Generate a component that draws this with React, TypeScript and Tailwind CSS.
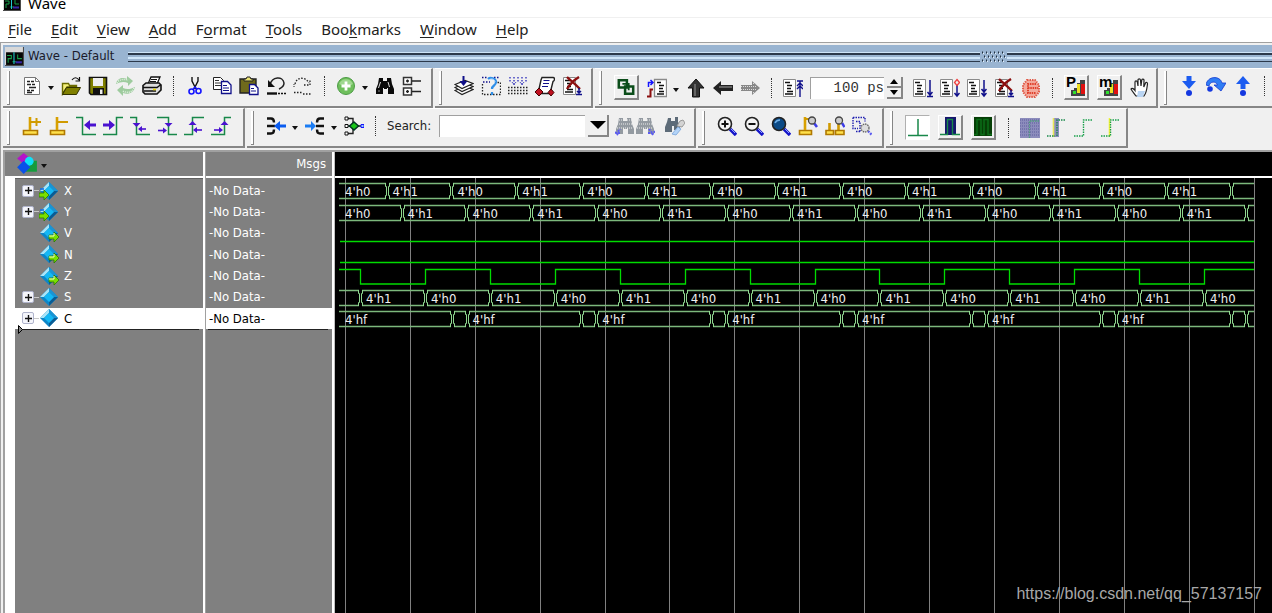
import { useState, type ReactNode } from "react";
import clsx from "clsx";

const UI = "font-['DejaVu_Sans_Condensed','DejaVu_Sans',sans-serif]";

const MENU: [string, string, string][] = [
  ["", "F", "ile"],
  ["", "E", "dit"],
  ["", "V", "iew"],
  ["", "A", "dd"],
  ["F", "o", "rmat"],
  ["", "T", "ools"],
  ["Boo", "k", "marks"],
  ["", "W", "indow"],
  ["", "H", "elp"],
];

type Signal = { name: string; bus: boolean; dir?: "in" | "out" };

const SIGNALS: Signal[] = [
  { name: "X", bus: true, dir: "in" },
  { name: "Y", bus: true, dir: "in" },
  { name: "V", bus: false, dir: "out" },
  { name: "N", bus: false, dir: "out" },
  { name: "Z", bus: false, dir: "out" },
  { name: "S", bus: true },
  { name: "C", bus: true },
];

/* ---------- icons, all on a 20x20 grid ---------- */

function Svg({ children, size = 20 }: { children: ReactNode; size?: number }) {
  return (
    <svg width={size} height={size} viewBox="0 0 20 20" fill="none" className="shrink-0" aria-hidden="true">
      {children}
    </svg>
  );
}

// page with text lines, shared by the run / breakpoint icons
const Page = ({ x = 0 }: { x?: number }) => (
  <g transform={`translate(${x} 0)`}>
    <path d="M1.5 1.5h12v17h-12z" fill="#fff" stroke="#8a8a8a" />
    <path d="M3 4.5h5M5 7.5h5M5 10.5h4M5 13.5h6M3 16h8" stroke="#111" strokeWidth="1.4" />
  </g>
);

const RedX = () => <path d="M5 1c3 3 7 6 13 12M17 1C12 4 8 8 5 13" stroke="#8b0f0f" strokeWidth="2.4" />;

const PostBase = ({ x = 0, w = 14 }: { x?: number; w?: number }) => (
  <g transform={`translate(${x} 0)`}>
    <path d={`M1.5 14.5h${w}v4h-${w}z`} fill="#ffe04a" stroke="#b07800" strokeWidth="1.6" />
    <path d={`M${w / 2 + 1} 1v13`} stroke="#d8a000" strokeWidth="2.6" />
  </g>
);

const Lens = ({ fill, children }: { fill: string; children?: ReactNode }) => (
  <Svg>
    <path d="M13 13l6 6" stroke="#1414c8" strokeWidth="3.4" />
    <path d="M13 12l5 5" stroke="#8fa0ff" strokeWidth="1" />
    <circle cx="8" cy="8" r="6.5" fill={fill} stroke="#222" strokeWidth="1.6" />
    {children}
  </Svg>
);

const Bino = ({ fill }: { fill: string }) => (
  <path d="M4 2h4v3h4V2h4l1 6 2 5v5h-6v-6h-1v1H9v-1H8v6H1v-5l2-5z" fill={fill} />
);

const icons = {
  doc: (
    <Svg>
      <path d="M2.500 1.500h11l4 4v13h-15z" fill="#fff" stroke="#777" />
      <path d="M13.500 1.500v4h4" stroke="#777" />
      <path d="M5 5.500h3M9 5.500h3M5 8.500h4M10 8.500h3M7 11.500h7M5 14.500h3M9 14.500h3M5 16.500h5" stroke="#222" strokeWidth="1.300" />
    </Svg>
  ),
  open: (
    <Svg>
      <path d="M1.500 18V7.500h6l1 2h7V11H6z" fill="#f5f07a" stroke="#6b6b00" strokeWidth="1.400" />
      <path d="M5.500 11.500h14l-4 7h-14z" fill="#808000" stroke="#333300" />
      <path d="M11 4c2-3 5-3 7 0M18.500 1v4h-4" stroke="#111" strokeWidth="1.200" />
    </Svg>
  ),
  save: (
    <Svg>
      <path d="M1.500 1.500h17v17H3l-1.500-1.500z" fill="#808000" stroke="#111" strokeWidth="1.600" />
      <path d="M5 2h10v8H5z" fill="#eee" />
      <path d="M5 12h11v6H5z" fill="#111" />
      <path d="M12 13.500h2.500V18H12z" fill="#eee" />
    </Svg>
  ),
  reload: (
    <Svg>
      <path d="M1 8c1-6 7-7 11-5V0l6 5-5 5V7C9 5 5 6 1 8z" fill="#9ecb9e" />
      <path d="M20 11c-1 6-7 8-12 6v3l-6-6 6-5v3c4 2 8 1 12-1z" fill="#9ecb9e" />
      <path d="M2 7c2-4 7-4 11-3M19 12c-2 5-7 5-12 3" stroke="#e4f2e4" strokeDasharray="1 1" strokeWidth="1.500" />
    </Svg>
  ),
  print: (
    <Svg>
      <path d="M6 8l3-7h9l-3 7z" fill="#fff" stroke="#111" strokeWidth="1.300" />
      <path d="M9 3.500h6M8 5.500h6" stroke="#111" />
      <path d="M1 9.500L4 7h13l2 2v5l-4 4H3l-2-2z" fill="#ddd" stroke="#111" strokeWidth="1.600" />
      <path d="M1 11.500h14l4-3M2 15h12" stroke="#111" strokeWidth="1.400" />
      <path d="M11 13.500h3" stroke="#e8d800" strokeWidth="1.600" />
    </Svg>
  ),
  cut: (
    <Svg>
      <path d="M7 1v4l4 8M13 1v4l-4 8" stroke="#111" strokeWidth="1.400" />
      <circle cx="6.500" cy="15.500" r="2.500" stroke="#1414ff" strokeWidth="1.600" />
      <circle cx="13.500" cy="15" r="2.500" stroke="#1414ff" strokeWidth="1.600" />
      <path d="M8 13l2-2 2 2" stroke="#1414ff" strokeWidth="1.400" />
    </Svg>
  ),
  copy: (
    <Svg>
      <path d="M1.500 1.500h7l3 3v9h-10z" fill="#fff" stroke="#222" />
      <path d="M3 4.500h4M3 7h6M3 9.500h6" stroke="#333" />
      <path d="M9.500 5.500h6l3.500 3.500v8.500H9.500z" fill="#fff" stroke="#10108a" strokeWidth="1.300" />
      <path d="M11 9.500h4M11 12h6M11 14.500h6" stroke="#10108a" />
    </Svg>
  ),
  paste: (
    <Svg>
      <path d="M1 3h16v14H1z" fill="#6f6a1c" stroke="#222" strokeWidth="1.400" />
      <path d="M5 5V3h2l1-2h3l1 2h2v2z" fill="#e8e070" stroke="#222" />
      <path d="M10.500 8.500h5l3.500 3.500v6.500h-8.500z" fill="#fff" stroke="#10108a" strokeWidth="1.300" />
      <path d="M12 12.500h3M12 15h5" stroke="#10108a" />
    </Svg>
  ),
  undo: (
    <Svg>
      <path d="M4 9C6 0 17 0 18 7c0 4-3 5-5 6" stroke="#222" strokeWidth="1.500" />
      <path d="M2 4v7h7z" fill="#111" />
      <path d="M1 17.500h10" stroke="#111" strokeWidth="2.400" />
      <path d="M12 17.500h8" stroke="#111" strokeWidth="1.600" strokeDasharray="2 1" />
    </Svg>
  ),
  redo: (
    <Svg>
      <path d="M2 8C4 0 13 1 16 7M11 9h6V3" stroke="#222" strokeWidth="1.300" strokeDasharray="1.500 1.500" />
      <path d="M1 16.500h9M10 18h9" stroke="#222" strokeWidth="1.500" strokeDasharray="1.500 1.500" />
      <path d="M1 8v4" stroke="#222" strokeDasharray="1 1" />
    </Svg>
  ),
  add: (
    <Svg>
      <circle cx="10" cy="10" r="8.500" fill="#6fbf5c" stroke="#4c9c45" />
      <path d="M3 8a7.500 7.500 0 0 1 14 0c-3 2-10 2-14 0z" fill="#9fd88f" />
      <path d="M10 5.500v9M5.500 10h9" stroke="#fff" strokeWidth="2.800" />
    </Svg>
  ),
  find: (
    <Svg>
      <Bino fill="#0a0a0a" />
      <path d="M5.500 6l-2 6M13 6l1.500 5" stroke="#ddd" />
      <path d="M3 15h2" stroke="#888" />
    </Svg>
  ),
  tree: (
    <Svg>
      <path d="M1.500 1.500h8v7h-8zM1.500 12h8v7h-8z" fill="#fff" stroke="#333" strokeWidth="1.500" />
      <path d="M4 5h3M5.500 3.500v3M4 15.500h3M5.500 14v3M10 5h9M10 15.500h9" stroke="#222" strokeWidth="1.300" />
    </Svg>
  ),
  compile: (
    <Svg>
      {[14.5, 11.5, 8.5].map((y) => (
        <path key={y} d={`M1 ${y}l10-4 8 3-11 5z`} fill="#fff" stroke="#222" strokeWidth="1.2" />
      ))}
      <path d="M9.500 0v6" stroke="#10108a" strokeWidth="2" />
      <path d="M5.500 5h8l-4 5z" fill="#10108a" />
    </Svg>
  ),
  compileOutdated: (
    <Svg>
      <path d="M1.500 8v10.500h18v-12H16" stroke="#222" strokeWidth="1.300" strokeDasharray="1.500 1.500" />
      <path d="M1 1.500h5M13 1.500h5M2 6h7" stroke="#10108a" strokeWidth="1.300" strokeDasharray="1.500 1.500" />
      <path d="M7 3c2-2 8-1 8 3 0 4-4 3-4 7M11 16v3" stroke="#2f8fe8" strokeWidth="2.200" />
      <path d="M8 4c2-2 6-1 6 2" stroke="#b8dcff" />
    </Svg>
  ),
  compileAll: (
    <Svg>
      <path d="M2 1v6M6 1v8M10 1v6M14 1v8M18 1v6" stroke="#2828b8" strokeWidth="1.300" strokeDasharray="1.500 1.500" />
      <path d="M4 6l2 3 2-3M12 6l2 3 2-3" stroke="#2828b8" strokeDasharray="1 1" />
      <path d="M0 11.500h20M0 14.500h20M0 17.500h20" stroke="#222" strokeWidth="1.500" strokeDasharray="1.500 1.500" />
    </Svg>
  ),
  simulate: (
    <Svg>
      <path d="M7 1.500h11c2 0 2 3 0 4l-3 12H3L6 4z" fill="#fff" stroke="#222" strokeWidth="1.400" />
      <path d="M8.500 4.500h6M8 7.500h6M7 10.500h6" stroke="#10108a" strokeWidth="1.200" />
      <path d="M4 12l4 4-4 4-4-4zM16 13l3 3.500-3 3.500-3-3.500z" fill="#c01020" stroke="#400" />
    </Svg>
  ),
  breakSim: (
    <Svg>
      <Page x={0} />
      <RedX />
      <path d="M17 12v6M14 18.500h6M15 15l2 2 2-2" stroke="#10108a" strokeWidth="1.500" />
    </Svg>
  ),
  env: (
    <Svg size={18}>
      <path d="M2 2.500h9v8H2zM9 9.500h9v8H9z" stroke="#0b4d1a" strokeWidth="2.800" />
      <path d="M6 6.500h7v7" stroke="#0b4d1a" strokeWidth="2" />
    </Svg>
  ),
  restart: (
    <Svg>
      <path d="M7.500 1.500h12v17h-12z" fill="#fff" stroke="#8a8a8a" strokeWidth="1.300" />
      <path d="M10 4.500h4M12 7.500h5M12 10.500h4M12 13.500h5M10 16h7" stroke="#111" strokeWidth="1.400" />
      <path d="M1.500 9V4.500H6M3.500 2l2.500 2.500L3.500 7" stroke="#1414ff" strokeWidth="1.500" />
      <path d="M6 11.500H3.500v7H0" stroke="#8b0f0f" strokeWidth="2" />
    </Svg>
  ),
  up: (
    <Svg>
      <path d="M10 1l8 9h-4.500v9h-7v-9H2z" fill="#333" stroke="#111" />
      <path d="M9 6v12" stroke="#777" strokeWidth="1.500" />
    </Svg>
  ),
  left: (
    <Svg>
      <path d="M0 10l8-7v4h12v6H8v4z" fill="#222" />
      <path d="M6 9h13" stroke="#777" strokeWidth="1.500" />
    </Svg>
  ),
  right: (
    <Svg>
      <path d="M20 10l-8-7v4H1v6h11v4z" fill="#888" />
      <path d="M1 8.500h16M1 11.500h16M13 5.500h3M13 14.500h3" stroke="#ddd" strokeDasharray="1 1" />
    </Svg>
  ),
  runLength: (
    <Svg>
      <Page x={-1} />
      <path d="M17 3v16M14 3h6M14 8l3-3 3 3M14 11l3-3 3 3" stroke="#10108a" strokeWidth="1.400" />
    </Svg>
  ),
  run: (
    <Svg>
      <Page x={-1} />
      <path d="M17 2v16M14 18.500h6M14.500 14l2.500 3 2.500-3" stroke="#10108a" strokeWidth="1.500" />
    </Svg>
  ),
  runContinue: (
    <Svg>
      <Page x={-1} />
      <path d="M17 7v11M14.500 15l2.500 3 2.500-3" stroke="#10108a" strokeWidth="1.500" />
      <path d="M17 1.500l2.500 3-2.500 3-2.500-3z" stroke="#f04040" strokeWidth="1.300" />
    </Svg>
  ),
  runAll: (
    <Svg>
      <Page x={-1} />
      <path d="M17 2v16M14.500 11l2.500 3 2.500-3M14.500 15l2.500 3 2.500-3" stroke="#10108a" strokeWidth="1.500" />
    </Svg>
  ),
  stop: (
    <Svg>
      <path d="M6 2h8l4 5v7l-4 5H6l-4-5V7z" fill="#f3a99c" />
      <path d="M6 2h8l4 5v7l-4 5H6l-4-5V7z" stroke="#e05a48" strokeWidth="2" strokeDasharray="1.500 1" />
      <path d="M15 6H7v9h8M7 10h10" stroke="#e0412c" strokeWidth="2" strokeDasharray="1.500 .8" />
    </Svg>
  ),
  hand: (
    <Svg>
      <path
        d="M6 18c-2-3-4-5-5-7 1-1.500 3 0 4 1.500V4c0-1.500 2-1.500 2.300 0L8 8V2c0-1.500 2.300-1.500 2.500 0L11 8l.8-6c.2-1.500 2.300-1 2.200.300L13.800 9 15.500 5c.6-1.200 2.200-.5 2 .8C17 9 17 14 14 18z"
        fill="#fff"
        stroke="#222"
        strokeWidth="1.200"
      />
      <path d="M8 13h7l-2 6H7z" fill="#b9d4f2" />
    </Svg>
  ),
  stepInto: (
    <Svg>
      <path d="M7.500 0h5v5H17l-7 8-7-8h4.500z" fill="#1c5cf0" />
      <circle cx="10" cy="17" r="3" fill="#1438e0" />
    </Svg>
  ),
  stepOver: (
    <Svg>
      <path d="M0 9C1 0 14-1 16 7h4l-5 8-7-6h3.500C10 5 4 5 3 10z" fill="#2f7df4" stroke="#1438d0" strokeWidth=".8" />
      <circle cx="4" cy="13" r="2.800" fill="#1438e0" />
    </Svg>
  ),
  stepOut: (
    <Svg>
      <path d="M10 0l7 8h-4.500v5h-5V8H3z" fill="#1c5cf0" />
      <circle cx="10" cy="17" r="3" fill="#1438e0" />
    </Svg>
  ),
  cursorAdd: (
    <Svg>
      <PostBase />
      <path d="M8 6h11M14.500 2v8" stroke="#d09a00" strokeWidth="2" />
    </Svg>
  ),
  cursorDel: (
    <Svg>
      <PostBase />
      <path d="M8 6h11" stroke="#d09a00" strokeWidth="2" />
    </Svg>
  ),
  prevTrans: (
    <Svg>
      <path d="M0 1.500h6.500v17H20" stroke="#18884a" strokeWidth="1.500" />
      <path d="M8 9l6-5v3.500h6v3h-6V14z" fill="#4a12d0" />
    </Svg>
  ),
  nextTrans: (
    <Svg>
      <path d="M0 18.500h13.500v-17H20" stroke="#18884a" strokeWidth="1.500" />
      <path d="M12 9L6 4v3.500H0v3h6V14z" fill="#4a12d0" />
    </Svg>
  ),
  prevFall: (
    <Svg>
      <path d="M0 1.500h6.500v17H20" stroke="#18884a" strokeWidth="1.500" />
      <path d="M6.500 11l-4-4h8zM8 13l4-3v6z" fill="#4a12d0" />
      <path d="M11 13h5" stroke="#4a12d0" strokeWidth="1.600" />
    </Svg>
  ),
  nextFall: (
    <Svg>
      <path d="M0 1.500h11.500v17H20" stroke="#18884a" strokeWidth="1.500" />
      <path d="M11.500 11l-4-4h8zM10 14.500l-4-3v6z" fill="#4a12d0" />
      <path d="M1 14.500h6" stroke="#4a12d0" strokeWidth="1.600" />
    </Svg>
  ),
  prevRise: (
    <Svg>
      <path d="M0 18.500h8.500v-17H20" stroke="#18884a" strokeWidth="1.500" />
      <path d="M8.500 5l-4 4h8zM9 14l4-3v6z" fill="#4a12d0" />
      <path d="M12 14h6" stroke="#4a12d0" strokeWidth="1.600" />
    </Svg>
  ),
  nextRise: (
    <Svg>
      <path d="M0 18.500h13.500v-17H20" stroke="#18884a" strokeWidth="1.500" />
      <path d="M13.500 5l-4 4h8zM12 14l-4-3v6z" fill="#4a12d0" />
      <path d="M3 14h6" stroke="#4a12d0" strokeWidth="1.600" />
    </Svg>
  ),
  drivers: (
    <Svg>
      <path d="M1 2.500h4c2 0 3 2 3 4M1 17.500h4c2 0 3-2 3-4M1 10h8" stroke="#111" strokeWidth="2.400" />
      <path d="M8 10l6-5v3.500h6v3h-6V15z" fill="#0a5cf0" />
    </Svg>
  ),
  readers: (
    <Svg>
      <path d="M19 2.500h-4c-2 0-3 2-3 4M19 17.500h-4c-2 0-3-2-3-4M11 10h8" stroke="#111" strokeWidth="2.400" />
      <path d="M11 10L6 5v3.500H0v3h6V15z" fill="#1a7cf4" />
    </Svg>
  ),
  fanout: (
    <Svg>
      <path d="M3 2.500h6v15H3M2 10h15" stroke="#222" strokeWidth="1.400" />
      <path d="M1 1h3v3H1zM1 8.500h3v3H1zM1 16h3v3H1z" fill="#fff" stroke="#111" />
      <path d="M10 6l4.500 4-4.500 4-4.500-4z" fill="#18c818" stroke="#032" strokeWidth="1.500" />
      <path d="M17 8.500h3v3h-3z" fill="#9cf" stroke="#1414ff" />
    </Svg>
  ),
  findPrev: (
    <Svg>
      <g opacity=".6">
        <Bino fill="#55606c" />
      </g>
      <path d="M2 4h16M2 8h16M2 12h16" stroke="#eee" strokeDasharray="1 1" />
      <path d="M1 18l4-5M0 16l3 3M3 17h3" stroke="#5c5cf0" strokeWidth="2" strokeDasharray="2 1" />
    </Svg>
  ),
  findNext: (
    <Svg>
      <g opacity=".6">
        <Bino fill="#55606c" />
      </g>
      <path d="M2 4h16M2 8h16M2 12h16" stroke="#eee" strokeDasharray="1 1" />
      <path d="M14 13l4 5M20 15l-3 4M13 17h4" stroke="#5c5cf0" strokeWidth="2" strokeDasharray="2 1" />
    </Svg>
  ),
  findOpts: (
    <Svg>
      <path d="M3 2h3v3h4V1h3v5l2 3v5H9v-4H7v6H0v-5l2-5z" fill="#5d6b78" />
      <path d="M12 10l3-5 3-1 2 3-3 4z" fill="#d4d4d4" stroke="#999" />
      <path d="M7 18l6-7 3 2-5 6z" fill="#b4d4f8" stroke="#88b0e0" />
    </Svg>
  ),
  zoomIn: (
    <Lens fill="#f4f4f4">
      <path d="M4.500 8h7M8 4.500v7" stroke="#111" strokeWidth="2" />
    </Lens>
  ),
  zoomOut: (
    <Lens fill="#f4f4f4">
      <path d="M4.500 8h7" stroke="#111" strokeWidth="2" />
    </Lens>
  ),
  zoomFull: (
    <Lens fill="#0b4a86">
      <path d="M4 7c1-2 3-3 5-3" stroke="#6fb0e8" strokeWidth="1.500" />
    </Lens>
  ),
  zoomCursor: (
    <Svg>
      <PostBase w={12} />
      <path d="M7 3h4" stroke="#d09a00" strokeWidth="2" />
      <path d="M16 7l3 4" stroke="#3c3ce8" strokeWidth="2.600" />
      <circle cx="14" cy="4.500" r="3.500" fill="#ccc" stroke="#444" strokeWidth="1.300" />
    </Svg>
  ),
  zoomCursors: (
    <Svg>
      <path d="M4.500 7v7M13.500 7v7" stroke="#d09a00" strokeWidth="2.600" />
      <path d="M1 14.500h7.500v4H1zM10.500 14.500H19v4h-8.500z" fill="#ffe04a" stroke="#b07800" strokeWidth="1.600" />
      <path d="M17 7l2.500 4" stroke="#3c3ce8" strokeWidth="2.400" />
      <circle cx="14" cy="4.500" r="3.500" fill="#ccc" stroke="#444" strokeWidth="1.300" />
    </Svg>
  ),
  zoomArea: (
    <Svg>
      <path d="M1 1.500h12v4M1 1.500v11h5M4 5.500h4v10M4 15.500h5" stroke="#2020b0" strokeWidth="1.400" strokeDasharray="1.500 1" />
      <path d="M16 15l4 4" stroke="#5c5cf0" strokeWidth="2.400" strokeDasharray="2 1" />
      <circle cx="13" cy="12" r="4" fill="#ddd" stroke="#666" strokeDasharray="1.500 .8" strokeWidth="1.300" />
    </Svg>
  ),
  expanded: (
    <Svg>
      <path d="M0 17.500h20M10 1v16" stroke="#18884a" strokeWidth="1.500" />
    </Svg>
  ),
  expandedDelta: (
    <Svg>
      <path d="M5 0h11v18H5z" fill="#16166e" />
      <path d="M0 17.500h7.500v-15h5v15H20" stroke="#18884a" strokeWidth="1.400" />
    </Svg>
  ),
  expandedEvent: (
    <Svg>
      <path d="M1 0h18v19H1z" fill="#063f06" />
      <path d="M1 17.500h3v-15h4v15h3v-15h4v15h4" stroke="#0b6e18" strokeWidth="1.500" />
    </Svg>
  ),
  expandAll: (
    <Svg>
      <path d="M0 0h20v20H0z" fill="#8c8cbc" />
      <path d="M0 2h20M0 5h20M0 8h20M0 11h20M0 14h20M0 17h20" stroke="#5c5c9c" strokeDasharray="1 1" />
      <path d="M9.500 20V3H20" stroke="#4f9c7c" strokeWidth="1.300" strokeDasharray="1.500 1" />
    </Svg>
  ),
  expandCursor: (
    <Svg>
      <path d="M7 0h5v19H7z" fill="#8c8cbc" />
      <path d="M6.500 0v19" stroke="#e8e85a" strokeWidth="1.600" />
      <path d="M0 18h8M10 18V2h9" stroke="#18884a" strokeWidth="1.400" strokeDasharray="1.500 1" />
    </Svg>
  ),
  collapseAll: (
    <Svg>
      <path d="M0 18h9.500V2H19" stroke="#18a04a" strokeWidth="1.400" strokeDasharray="1.500 1" />
    </Svg>
  ),
  collapseCursor: (
    <Svg>
      <path d="M8.500 0v19" stroke="#f4f43a" strokeWidth="1.600" />
      <path d="M0 18h9.500V2H19" stroke="#18a04a" strokeWidth="1.400" strokeDasharray="1.500 1" />
    </Svg>
  ),
};

type IconName = keyof typeof icons;

function PerfIcon({ letter }: { letter: string }) {
  return (
    <span className="relative block size-5">
      <Svg>
        <path d="M5 13h3v-2h3V6h3V3h5v16H5z" fill="#444" />
        <path d="M7 14h3v3H7z" fill="#2ee02e" />
        <path d="M11 7h3v9h-3z" fill="#f0e020" />
        <path d="M15 7h4v10h-4z" fill="#e01010" />
      </Svg>
      <b className="absolute left-0 top-0 font-['Liberation_Sans',sans-serif] text-[15px] leading-[10px] text-black">
        {letter}
      </b>
    </span>
  );
}

function AppLogo({ size }: { size: number }) {
  return (
    <svg width={size} height={size} viewBox="0 0 18 18" className="shrink-0" aria-hidden="true">
      <path d="M0 0h18v18H0z" fill="#4a4a4a" />
      <path d="M0 0h17v17H0z" fill="#d8d8d8" />
      <path d="M1 5h16v12H1z" fill="#050505" />
      <path d="M2 8h4v3H3v4M12 7v4h4M7 14h4" stroke="#17a04a" fill="none" />
      <path d="M8.500 5v11" stroke="#20c8d0" />
      <path d="M10 14.500h6" stroke="#3a28a8" strokeWidth="2" />
    </svg>
  );
}

/* ---------- toolbar parts ---------- */

function Tool({ icon, label }: { icon: IconName; label: string }) {
  return (
    <button aria-label={label} className="flex h-7 w-[27px] shrink-0 items-center justify-center">
      {icons[icon]}
    </button>
  );
}

function Raised({ label, pressed, children }: { label: string; pressed?: boolean; children: ReactNode }) {
  return (
    <button
      aria-label={label}
      className={clsx(
        "flex size-[25px] shrink-0 items-center justify-center border",
        pressed
          ? "border-[#b0b0b0] border-b-white border-r-white bg-white"
          : "border-b-2 border-r-2 border-white border-b-[#868686] border-r-[#868686]"
      )}
    >
      {children}
    </button>
  );
}

const RaisedSet = ({ children }: { children: ReactNode }) => (
  <span className="ml-1 mr-1 flex shrink-0 gap-2">{children}</span>
);

function Drop({ label }: { label: string }) {
  return (
    <button aria-label={label} className="flex h-7 w-3 shrink-0 items-center justify-center pt-1">
      <svg width="6" height="4" viewBox="0 0 6 4" aria-hidden="true">
        <path d="M0 0h6L3 4z" fill="#111" />
      </svg>
    </button>
  );
}

const Sep = () => (
  <span className="flex w-4 shrink-0 justify-center">
    <span className="h-5 border-l border-dotted border-[#333]" />
  </span>
);

// groups of flat icons sit a little higher than the ones with raised buttons
function Group({ children, className, flat }: { children: ReactNode; className?: string; flat?: boolean }) {
  return (
    <div
      role="toolbar"
      className={clsx(
        "mr-[2px] flex h-10 shrink-0 items-center border-b-2 border-r-2 border-t border-[#868686] border-t-white pl-1",
        className
      )}
    >
      <span className="mr-2 h-[34px] w-[3px] shrink-0 border-b border-r border-b-[#868686] border-r-[#868686] bg-white" />
      <div className={clsx("flex min-w-0 flex-1 items-center", flat && "pb-1")}>{children}</div>
    </div>
  );
}

/* ---------- signal list ---------- */

function SignalIcon({ dir }: { dir?: "in" | "out" }) {
  return (
    <Svg>
      <path d="M10 1l9 9-9 9-9-9z" fill="#0d86c8" />
      <path d="M10 1L1 10l4 0 5-5z" fill="#a8e4f8" />
      <path d="M10 1v4l5 5h4z" fill="#1a94d4" />
      <path d="M10 19v-4l5-5h4z" fill="#0a5c94" />
      <path d="M10 5l5 5-5 5-5-5z" fill="#14b8f4" />
      {dir && (
        <path
          d={dir === "in" ? "M0 12h5V9l5 5-5 5v-3H0z" : "M10 12h5V9l5 5-5 5v-3h-5z"}
          fill="#7ae000"
          stroke="#2a7a00"
          strokeWidth=".8"
        />
      )}
      {dir === "in" && <path d="M1 8h4" stroke="#1470e0" strokeWidth="1.600" />}
      {dir === "out" && <path d="M10 13h5V10" stroke="#f4ffd0" />}
    </Svg>
  );
}

function SignalRow({ signal, selected, onSelect }: { signal: Signal; selected: boolean; onSelect: () => void }) {
  return (
    <li className={clsx("flex items-center pl-[7px]", selected ? "bg-white text-black" : "text-white")}>
      <span className="flex w-[17px] shrink-0 items-center">
        {signal.bus && (
          <>
            <button
              aria-label={`Expand ${signal.name}`}
              className="flex size-3 shrink-0 items-center justify-center rounded-[2px] border border-[#b0b4cc] bg-[#f4f5fb]"
            >
              <svg width="7" height="7" viewBox="0 0 7 7" aria-hidden="true">
                <path d="M0 3.500h7M3.500 0v7" stroke="#111" strokeWidth="1.400" />
              </svg>
            </button>
            <span className="h-px flex-1 bg-[#c8c8c8]" />
          </>
        )}
      </span>
      <button className="flex flex-1 items-center gap-[5px] text-left" onClick={onSelect}>
        <SignalIcon dir={signal.dir} />
        {signal.name}
      </button>
    </li>
  );
}

/* ---------- waveform ---------- */

// x is measured from the left edge of the wave pane, y from below its header
const STEP = 64.93;
const START = 4;
const END = 919;

const steps = (first: number, step = STEP) => {
  const out: number[] = [];
  for (let x = first; x < END; x += step) out.push(x);
  return out;
};

type BusWave = { top: number; edges: number[]; labels: { x: number; text: string }[] };

function alternate(top: number, first: number, startLabel: boolean): BusWave {
  const edges = steps(first);
  const labels = edges
    .map((x, i) => ({ x: x + 6, text: i % 2 === 0 ? "4'h1" : "4'h0" }))
    .filter((l) => l.x < END - 25);
  if (startLabel) labels.unshift({ x: 10, text: "4'h0" });
  return { top, edges, labels };
}

const carry = steps(131.5, STEP * 2);

const BUSES: BusWave[] = [
  alternate(5, 51.5, true),
  alternate(27, 66.5, true),
  alternate(112, 25, false),
  {
    top: 133,
    edges: [...steps(116.5, STEP * 2), ...carry],
    labels: [10, ...carry.filter((x) => x < END - 30).map((x) => x + 6)].map((x) => ({ x, text: "4'hf" })),
  },
];

function Bus({ top, edges, labels }: BusWave) {
  const xs = [...edges].sort((a, b) => a - b).map(Math.round);
  const bot = top + 15;
  const bounds = [START, ...xs, END];
  return (
    <g>
      {bounds.slice(1).map((x, i) => {
        const from = i === 0 ? START : bounds[i] + 2;
        const to = x === END ? END : x - 1;
        return <path key={x} d={`M${from} ${top + 0.5}H${to}M${from} ${bot + 0.5}H${to}`} />;
      })}
      {xs.map((x) => (
        <path
          key={x}
          stroke="#90d890"
          strokeWidth="1"
          d={`M${x - 1.5} ${top}v3.500h1v9h-1v3.500M${x + 2.5} ${top}v3.500h-1v9h1v3.500`}
        />
      ))}
      {labels.map((l) => (
        <text key={l.x} x={l.x} y={top + 13} fill="#f0f0f0" stroke="none">
          {l.text}
        </text>
      ))}
    </g>
  );
}

function zPath() {
  let d = `M${START} 91.500`;
  steps(25).forEach((x, i) => {
    d += `H${Math.round(x) + 0.5}V${i % 2 === 0 ? 106 : 91.5}`;
  });
  return `${d}H${END}`;
}

function Waves() {
  return (
    <svg className="w-0 flex-1 text-[13px]" fill="none" role="img" aria-label="Waveforms">
      {steps(10.3).concat(END + 0.5).map((x) => (
        <path key={x} d={`M${Math.floor(x) + 0.5} 0v3000`} stroke="#808080" />
      ))}
      <g stroke="#7cb87c" strokeWidth="1.300">
        {BUSES.map((b) => (
          <Bus key={b.top} {...b} />
        ))}
      </g>
      <g stroke="#00dc00" strokeWidth="1.300">
        <path d={`M${START + 1} 63.500H${END}M${START + 1} 84.500H${END}`} />
        <path d={zPath()} />
      </g>
    </svg>
  );
}

/* ---------- page ---------- */

const Grip = () => (
  <span className="flex h-[10px] flex-col justify-between border-t border-[#cfe6fa]">
    <span className="h-[2px] bg-[#2c3a4c]" />
    <span className="h-[2px] bg-[#cfe6fa]" />
    <span className="h-px bg-[#2c3a4c]" />
  </span>
);

const PANE_HEAD = "flex h-6 items-center bg-[#808080] text-white";
const FIELD = "h-[22px] border-l border-t border-[#a0a0a0] bg-white";

export default function App() {
  const [selected, setSelected] = useState("C");
  const [search, setSearch] = useState("");
  const [runLength, setRunLength] = useState("100 ps");

  return (
    <div className={clsx("flex h-screen flex-col overflow-hidden bg-[#f0f0f0] text-[13px] text-black", UI)}>
      <header className="flex h-[17px] shrink-0 items-end gap-[7px] bg-white pb-[6px] pl-[3px] font-['Noto_Sans',sans-serif] text-[15px]">
        <AppLogo size={18} />
        <h1 className="leading-4">Wave</h1>
      </header>

      <nav className="flex h-[26px] shrink-0 items-center gap-[19px] border-b border-t border-[#a0a0a0] border-t-[#f0f0f0] bg-white pb-[2px] pl-2 font-['Noto_Sans',sans-serif] text-[15px] leading-5 text-[#222]">
        {MENU.map(([before, key, after]) => (
          <button key={before + key + after}>
            {before}
            <u className="underline-offset-2">{key}</u>
            {after}
          </button>
        ))}
      </nav>

      <main className="flex min-h-0 flex-1 flex-col border-l border-[#a0a0a0] pl-[2px] pt-[2px]">
        <div className="flex h-[23px] shrink-0 items-center bg-[#99b4d1] pl-[2px]">
          <AppLogo size={19} />
          <h2 className="ml-1 w-[100px] shrink-0 pb-[2px] text-[#1a1a2a]">Wave - Default</h2>
          <div className="grid flex-1 grid-cols-[852fr_27px_265fr] items-center">
            <Grip />
            <svg width="27" height="12" aria-hidden="true">
              {[1, 5, 9].map((y) => (
                <path key={y} d={`M${y === 5 ? 4 : 2} ${y + 0.5}h22`} stroke="#22303f" strokeWidth="2" strokeDasharray="1 3" />
              ))}
              {[2, 6, 10].map((y) => (
                <path key={y} d={`M${y === 6 ? 5 : 3} ${y + 0.5}h22`} stroke="#e8f4ff" strokeDasharray="1 3" />
              ))}
            </svg>
            <Grip />
          </div>
        </div>

        <div className="flex h-10 shrink-0">
          <Group flat className="w-[430px]">
            <Tool icon="doc" label="New" />
            <Drop label="New options" />
            <Tool icon="open" label="Open" />
            <Tool icon="save" label="Save" />
            <Tool icon="reload" label="Reload" />
            <Tool icon="print" label="Print" />
            <Sep />
            <Tool icon="cut" label="Cut" />
            <Tool icon="copy" label="Copy" />
            <Tool icon="paste" label="Paste" />
            <Tool icon="undo" label="Undo" />
            <Tool icon="redo" label="Redo" />
            <Sep />
            <Tool icon="add" label="Add selected" />
            <Drop label="Add options" />
            <Tool icon="find" label="Find" />
            <Tool icon="tree" label="Collapse all" />
          </Group>
          <Group flat className="w-[158px]">
            <Tool icon="compile" label="Compile" />
            <Tool icon="compileOutdated" label="Compile out of date" />
            <Tool icon="compileAll" label="Compile all" />
            <Tool icon="simulate" label="Simulate" />
            <Tool icon="breakSim" label="Break" />
          </Group>
          <Group className="w-[563px]">
            <RaisedSet>
              <Raised label="Environment">{icons.env}</Raised>
            </RaisedSet>
            <Tool icon="restart" label="Restart" />
            <Drop label="Restart options" />
            <Tool icon="up" label="Up" />
            <Tool icon="left" label="Back" />
            <Tool icon="right" label="Forward" />
            <Sep />
            <Tool icon="runLength" label="Restart run" />
            <input
              aria-label="Run length"
              value={runLength}
              onChange={(e) => setRunLength(e.target.value)}
              className={clsx(
                FIELD,
                "ml-1 w-[74px] shrink-0 text-right font-['Liberation_Mono',monospace] text-sm text-[#333]"
              )}
            />
            <span className="ml-[3px] mr-[6px] flex w-4 shrink-0 flex-col">
              {["M4 0l4 5H0z", "M0 0h8L4 5z"].map((d, i) => (
                <button
                  key={d}
                  aria-label={i ? "Decrease" : "Increase"}
                  className="flex h-[11px] items-center justify-center border-b-2 border-r-2 border-[#868686]"
                >
                  <svg width="8" height="5" aria-hidden="true">
                    <path d={d} fill="#000" />
                  </svg>
                </button>
              ))}
            </span>
            <Tool icon="run" label="Run" />
            <Tool icon="runContinue" label="Continue run" />
            <Tool icon="runAll" label="Run all" />
            <Tool icon="breakSim" label="Stop" />
            <Tool icon="stop" label="Halt" />
            <Sep />
            <RaisedSet>
              <Raised label="Performance profiling">
                <PerfIcon letter="P" />
              </Raised>
              <Raised label="Memory profiling">
                <PerfIcon letter="m" />
              </Raised>
            </RaisedSet>
            <Tool icon="hand" label="Edit mode" />
          </Group>
          <Group flat className="flex-1 border-r-0">
            <Tool icon="stepInto" label="Step into" />
            <Tool icon="stepOver" label="Step over" />
            <Tool icon="stepOut" label="Step out" />
            <Sep />
          </Group>
        </div>

        <div className="flex h-10 shrink-0">
          <Group flat className="w-[242px]">
            <Tool icon="cursorAdd" label="Insert cursor" />
            <Tool icon="cursorDel" label="Delete cursor" />
            <Tool icon="prevTrans" label="Previous transition" />
            <Tool icon="nextTrans" label="Next transition" />
            <Tool icon="prevFall" label="Previous falling edge" />
            <Tool icon="nextFall" label="Next falling edge" />
            <Tool icon="prevRise" label="Previous rising edge" />
            <Tool icon="nextRise" label="Next rising edge" />
          </Group>
          <Group flat className="w-[449px]">
            <Tool icon="drivers" label="Show drivers" />
            <Drop label="Driver options" />
            <Tool icon="readers" label="Show readers" />
            <Drop label="Reader options" />
            <Tool icon="fanout" label="Show fanout" />
            <Sep />
            <label htmlFor="search" className="ml-1 text-[#222]">
              Search:
            </label>
            <input
              id="search"
              value={search}
              onChange={(e) => setSearch(e.target.value)}
              className={clsx(FIELD, "ml-2 w-0 flex-1 px-1")}
            />
            <button
              aria-label="Search history"
              className="ml-[3px] mr-[6px] flex h-[22px] w-[21px] shrink-0 items-center justify-center border-b-2 border-r-2 border-[#868686]"
            >
              <svg width="16" height="8" aria-hidden="true">
                <path d="M0 0h16L8 8z" fill="#000" />
              </svg>
            </button>
            <button aria-label="Find previous" className="shrink-0">{icons.findPrev}</button>
            <button aria-label="Find next" className="shrink-0">{icons.findNext}</button>
            <button aria-label="Search options" className="ml-[10px] mr-[9px] shrink-0">{icons.findOpts}</button>
          </Group>
          <Group flat className="w-[186px]">
            <Tool icon="zoomIn" label="Zoom in" />
            <Tool icon="zoomOut" label="Zoom out" />
            <Tool icon="zoomFull" label="Zoom full" />
            <Tool icon="zoomCursor" label="Zoom on cursor" />
            <Tool icon="zoomCursors" label="Zoom between cursors" />
            <Tool icon="zoomArea" label="Zoom area" />
          </Group>
          <Group className="w-[242px]">
            <RaisedSet>
              <Raised label="Expanded time off" pressed>
                {icons.expanded}
              </Raised>
              <Raised label="Expanded time deltas">{icons.expandedDelta}</Raised>
              <Raised label="Expanded time events">{icons.expandedEvent}</Raised>
            </RaisedSet>
            <Sep />
            <Tool icon="expandAll" label="Expand all time" />
            <Tool icon="expandCursor" label="Expand at cursor" />
            <Tool icon="collapseAll" label="Collapse all time" />
            <Tool icon="collapseCursor" label="Collapse at cursor" />
          </Group>
        </div>

        <div className="mt-[2px] flex min-h-0 flex-1 border-l-2 border-t-2 border-[#a0a0a0]">
          <section className="flex w-[198px] shrink-0 flex-col">
            <div className={PANE_HEAD}>
              <span className="ml-[11px]">
                <Svg size={22}>
                  <path d="M7 0l6 5-6 5-6-5z" fill="#b414c8" />
                  <path d="M9 7h10v10H9z" fill="#149c3c" />
                  <circle cx="12" cy="7.500" r="4" fill="#10e0f8" />
                  <path d="M7 7l6 6-6 6-6-6z" fill="#0a50e8" />
                </Svg>
              </span>
              <Drop label="Filter objects" />
            </div>
            <div className="flex flex-1 border-t-2 border-white bg-white pl-[10px]">
              <div className="flex-1 border-t border-[#606060] bg-[#808080]">
                <ul className="mt-px grid h-[149px] grid-rows-7">
                  {SIGNALS.map((s) => (
                    <SignalRow
                      key={s.name}
                      signal={s}
                      selected={s.name === selected}
                      onSelect={() => setSelected(s.name)}
                    />
                  ))}
                </ul>
                <div className="relative ml-[3px] mr-1 h-px bg-[#222]">
                  <svg className="absolute -top-1 left-0" width="5" height="9" aria-hidden="true">
                    <path d="M.5 .5v8l4-4z" fill="#888" stroke="#000" />
                  </svg>
                </div>
              </div>
            </div>
          </section>

          <div className="w-[3px] shrink-0 cursor-col-resize border-r border-[#a0a0a0] bg-white" />

          <section className="flex w-[126px] shrink-0 flex-col">
            <div className={clsx(PANE_HEAD, "justify-end pr-[6px]")}>Msgs</div>
            <div className="flex-1 border-t-2 border-white bg-[#808080]">
              <ul className="mt-[2px] grid h-[149px] grid-rows-7">
                {SIGNALS.map((s) => (
                  <li
                    key={s.name}
                    className={clsx(
                      "flex items-center pl-[3px]",
                      s.name === selected ? "bg-white text-black" : "text-white"
                    )}
                  >
                    -No Data-
                  </li>
                ))}
              </ul>
              <div className="ml-[2px] mr-1 h-px bg-[#222]" />
            </div>
          </section>

          <div className="w-[3px] shrink-0 cursor-col-resize border-r border-[#c0c0c0] bg-white" />

          <section className="relative flex flex-1 flex-col bg-black">
            <div className="h-6 shrink-0" />
            <div className="flex flex-1 border-t-2 border-white">
              <Waves />
            </div>
            <a
              href="https://blog.csdn.net/qq_57137157"
              className="absolute bottom-[7px] right-[10px] font-['Liberation_Sans',sans-serif] text-base text-[#a8a8a8]"
            >
              https://blog.csdn.net/qq_57137157
            </a>
          </section>
        </div>
      </main>
    </div>
  );
}
